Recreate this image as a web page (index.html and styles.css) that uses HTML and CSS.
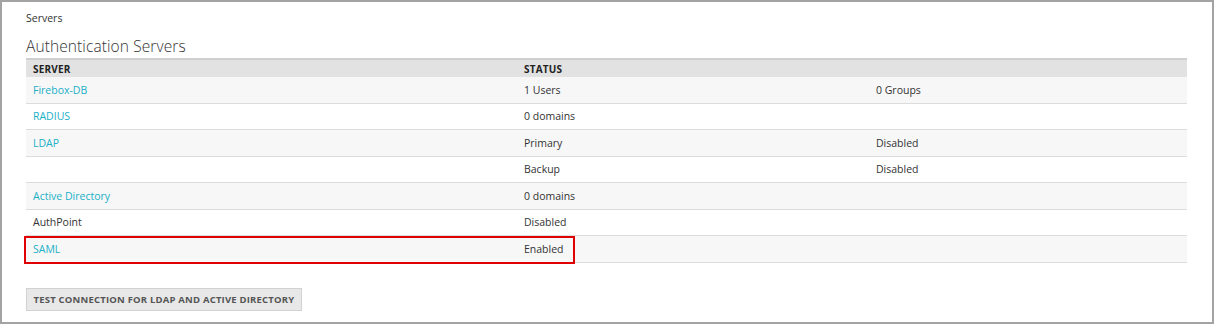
FILE: index.html
```html
<!DOCTYPE html>
<html>
<head>
<meta charset="utf-8">
<link rel="stylesheet" href="styles.css">
</head>
<body>
<div class="frame">
  <div class="crumb">Servers</div>
  <h1 class="title">Authentication Servers</h1>
  <div class="table">
    <div class="row head">
      <div class="cell">SERVER</div>
      <div class="cell">STATUS</div>
      <div class="cell"></div>
    </div>
    <div class="row odd">
      <div class="cell"><a class="link">Firebox-DB</a></div>
      <div class="cell">1 Users</div>
      <div class="cell">0 Groups</div>
    </div>
    <div class="row">
      <div class="cell"><a class="link">RADIUS</a></div>
      <div class="cell">0 domains</div>
      <div class="cell"></div>
    </div>
    <div class="row odd">
      <div class="cell"><a class="link">LDAP</a></div>
      <div class="cell">Primary</div>
      <div class="cell">Disabled</div>
    </div>
    <div class="row">
      <div class="cell"></div>
      <div class="cell">Backup</div>
      <div class="cell">Disabled</div>
    </div>
    <div class="row odd">
      <div class="cell"><a class="link">Active Directory</a></div>
      <div class="cell">0 domains</div>
      <div class="cell"></div>
    </div>
    <div class="row">
      <div class="cell">AuthPoint</div>
      <div class="cell">Disabled</div>
      <div class="cell"></div>
    </div>
    <div class="row odd highlight">
      <div class="cell"><a class="link">SAML</a></div>
      <div class="cell">Enabled</div>
      <div class="cell"></div>
    </div>
  </div>
  <button class="btn">TEST CONNECTION FOR LDAP AND ACTIVE DIRECTORY</button>
</div>
</body>
</html>
```

FILE: styles.css
```css
html, body {
  margin: 0;
  padding: 0;
  background: #fff;
}
.frame {
  box-sizing: border-box;
  width: 1214px;
  height: 324px;
  border: 2px solid #a3a3a3;
  padding: 9px 25px 0 24px;
  font-family: "Open Sans", "Liberation Sans", sans-serif;
  font-size: 10.5px;
  color: #333;
}
.crumb {
  font-size: 10.5px;
  line-height: 14px;
  color: #333;
}
.title {
  margin: 11px 0 0 0;
  font-family: "Open Sans", sans-serif;
  font-weight: 300;
  font-size: 15.5px;
  line-height: 20px;
  color: #333;
  letter-spacing: 0.1px;
}
.table {
  margin-top: 2px;
  width: 1161px;
}
.row {
  display: grid;
  grid-template-columns: 491px 352px 1fr;
  height: 25.5px;
  align-items: center;
  border-bottom: 1px solid #dcdcdc;
  position: relative;
}
.row.head {
  height: 17px;
  background: #e2e2e2;
  border-top: 2px solid #cfcfcf;
  border-bottom: none;
  font-weight: 700;
  font-size: 10px;
  color: #222;
  letter-spacing: 0.2px;
}
.row.odd {
  background: #f7f7f7;
}
.cell {
  padding-left: 7px;
  white-space: nowrap;
}
.link {
  color: #1ab0c8;
  text-decoration: none;
}
.highlight::after {
  content: "";
  position: absolute;
  left: -2px;
  top: 0;
  width: 551px;
  height: 28px;
  border: 2px solid #e00000;
  box-sizing: border-box;
}
.btn {
  display: block;
  margin-top: 25px;
  margin-left: 0;
  box-sizing: border-box;
  width: 276px;
  height: 23px;
  padding: 0;
  background: #e8e8e8;
  border: 1px solid #d2d2d2;
  font-family: "Open Sans", sans-serif;
  font-weight: 700;
  font-size: 9.5px;
  color: #555;
  letter-spacing: 0.2px;
}
```
